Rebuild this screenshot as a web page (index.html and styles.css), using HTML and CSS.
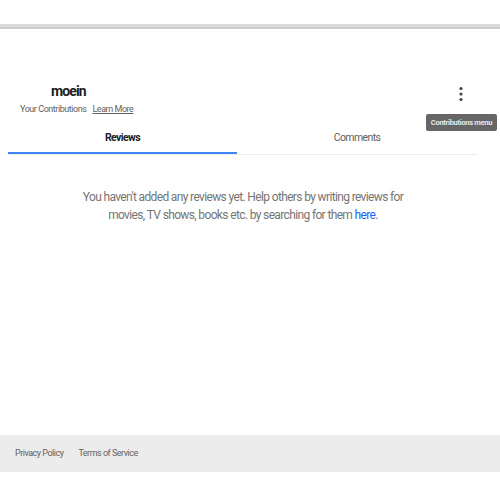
FILE: index.html
```html
<!DOCTYPE html>
<html>
<head>
<meta charset="utf-8">
<link rel="stylesheet" href="styles.css">
</head>
<body>
<div class="topbar"></div>
<main class="page">
  <section class="profile">
    <div class="who">
      <div class="name">moein</div>
      <div class="sub"><span>Your Contributions</span><a class="learn" href="#">Learn More</a></div>
    </div>
    <button class="kebab" aria-label="Contributions menu">
      <svg width="6" height="16" viewBox="0 0 6 16"><circle cx="3" cy="2.5" r="1.6"/><circle cx="3" cy="8" r="1.6"/><circle cx="3" cy="13.5" r="1.6"/></svg>
    </button>
    <div class="tooltip">Contributions menu</div>
  </section>
  <nav class="tabs">
    <div class="tab active">Reviews</div>
    <div class="tab">Comments</div>
  </nav>
  <p class="empty">You haven't added any reviews yet. Help others by writing reviews for<br>movies, TV shows, books etc. by searching for them <a class="here" href="#">here</a>.</p>
</main>
<footer class="footer">
  <a href="#">Privacy Policy</a>
  <a href="#">Terms of Service</a>
</footer>
<div class="bottomline"></div>
</body>
</html>
```
FILE: styles.css
```css
html, body {
  margin: 0;
  padding: 0;
  background: #fff;
}
body {
  font-family: Roboto, "Liberation Sans", sans-serif;
  height: 500px;
  display: flex;
  flex-direction: column;
  overflow: hidden;
}
.topbar {
  margin-top: 24px;
  height: 3px;
  background: #dadada;
  border-bottom: 2px solid #cdcdcd;
  flex: none;
}
.page {
  height: 406px;
  flex: none;
  display: flex;
  flex-direction: column;
}
.profile {
  position: relative;
  display: flex;
  justify-content: space-between;
  align-items: flex-start;
  padding: 54px 0 0 20px;
}
.name {
  margin-left: 31px;
  font-size: 14px;
  font-weight: 700;
  color: #212121;
  line-height: 16px;
  letter-spacing: -0.9px;
}
.sub {
  margin-top: 5px;
  font-size: 9px;
  color: #616161;
  display: flex;
  gap: 6px;
  letter-spacing: -0.45px;
}
.learn {
  color: #616161;
  text-decoration: underline;
}
.kebab {
  border: 0;
  background: none;
  padding: 0;
  margin: 3px 36px 0 0;
  width: 6px;
  height: 16px;
  fill: #444;
}
.kebab svg {
  display: block;
}
.tooltip {
  position: absolute;
  left: 426px;
  top: 85px;
  width: 71px;
  height: 17px;
  background: #666;
  color: #e8e8e8;
  border-radius: 2px;
  font-size: 7.5px;
  font-weight: 700;
  letter-spacing: -0.3px;
  display: flex;
  align-items: center;
  justify-content: center;
}
.tabs {
  margin: 14px 0 0 8px;
  width: 469px;
  display: grid;
  grid-template-columns: 229px 240px;
  border-bottom: 1px solid #ececec;
}
.tab {
  text-align: center;
  font-size: 10.5px;
  color: #616161;
  height: 26px;
  line-height: 20px;
  letter-spacing: -0.6px;
}
.tab.active {
  color: #212121;
  font-weight: 700;
  border-bottom: 2px solid #4285f4;
  height: 24px;
}
.empty {
  margin: 33px 0 0;
  text-align: center;
  font-size: 12px;
  line-height: 18px;
  color: #757575;
  letter-spacing: -0.64px;
  width: 486px;
}
.here {
  color: #1a5ff5;
  text-decoration: none;
}
.footer {
  height: 36px;
  flex: none;
  background: #ececec;
  display: flex;
  align-items: center;
  gap: 15px;
  padding-left: 15px;
}
.footer a {
  font-size: 9px;
  color: #616161;
  text-decoration: none;
  letter-spacing: -0.5px;
}
.bottomline {
  height: 1px;
  background: #ececec;
}
```
